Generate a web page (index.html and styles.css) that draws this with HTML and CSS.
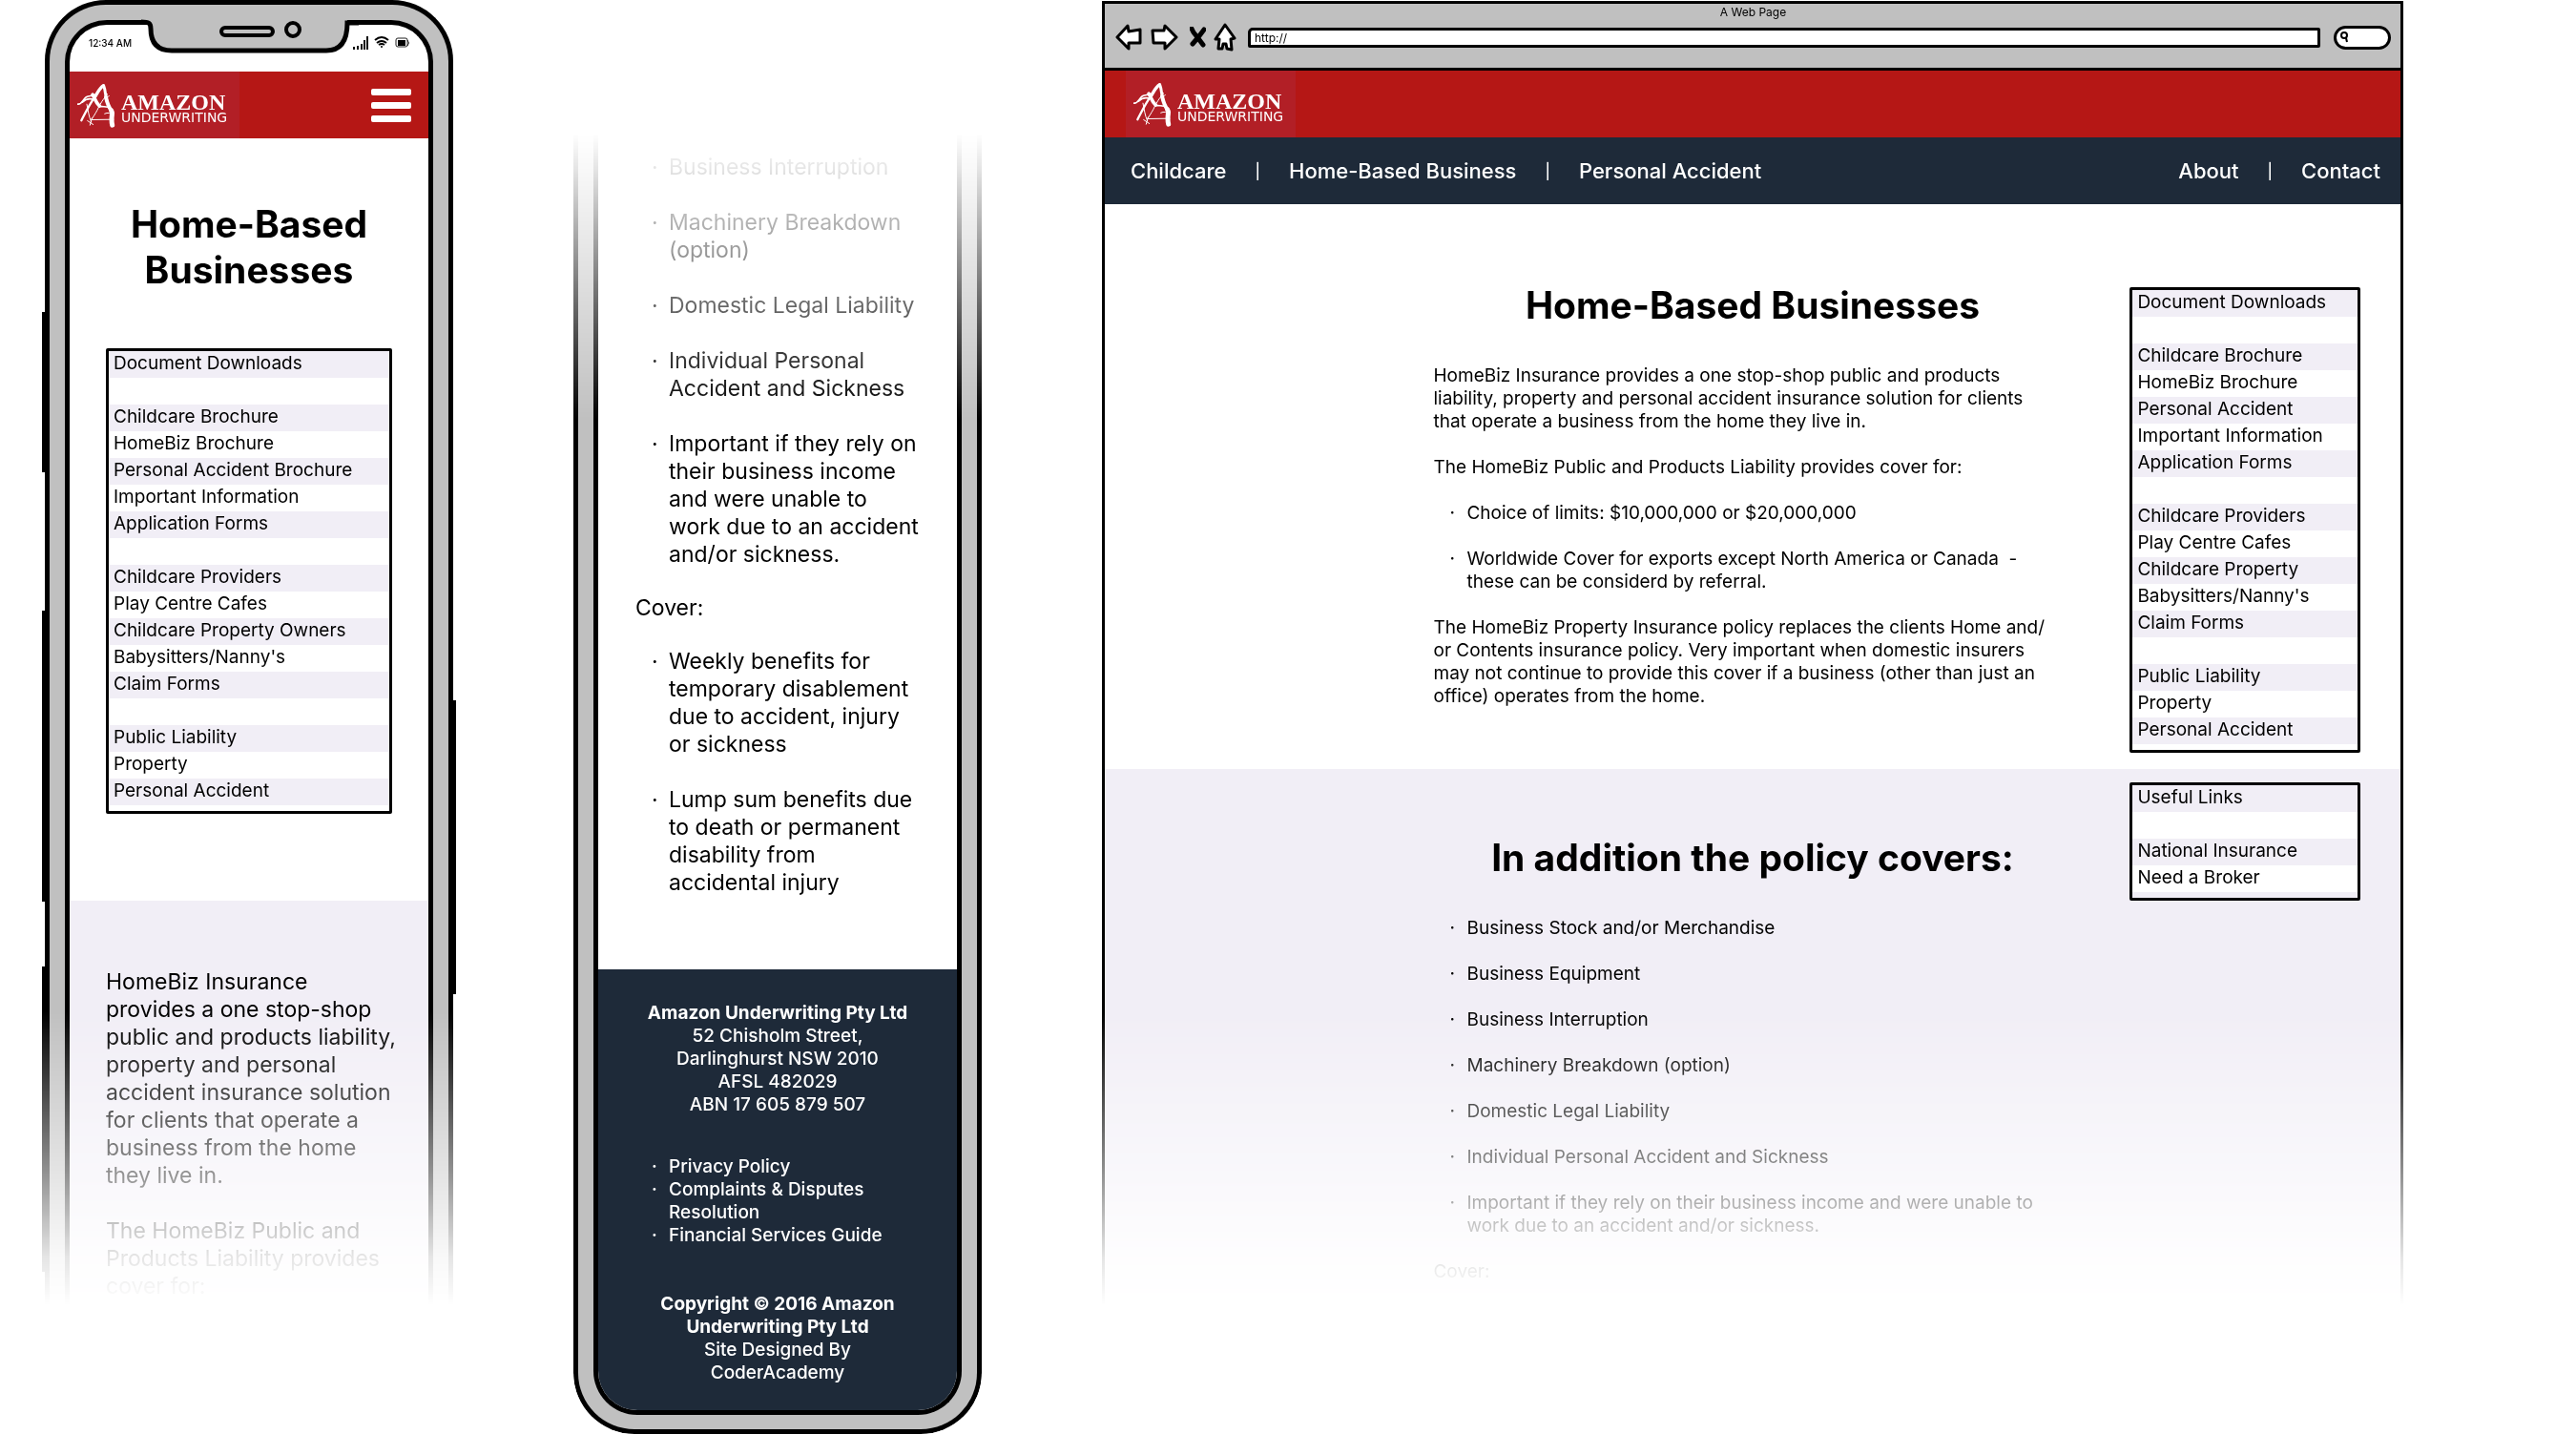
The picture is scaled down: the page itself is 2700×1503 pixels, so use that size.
FILE: index.html
```html
<!DOCTYPE html>
<html lang="en">
<head>
<meta charset="utf-8">
<title>Amazon Underwriting – Home-Based Businesses</title>
<link rel="stylesheet" href="styles.css">
</head>
<body>
<svg class="defs" aria-hidden="true">
  <symbol id="mark" viewBox="150 256 120 140">
    <g fill="none" stroke="#fff" stroke-linecap="round" stroke-linejoin="round">
      <path stroke-width="10" d="M232 264C221 270 214 286 205 300"/>
      <path stroke-width="7" d="M208 296C194 312 180 340 163 373"/>
      <path stroke-width="9" d="M233 264C239 278 238 296 243 312"/>
      <path stroke-width="11" d="M198 292C206 304 208 318 220 328"/>
      <path stroke-width="12" d="M240 300C244 318 248 330 257 342"/>
      <path stroke-width="15" d="M257 342C264 352 254 362 260 388"/>
      <path stroke-width="5" d="M152 322C164 324 168 306 178 300C188 294 196 298 204 292M166 316C176 306 186 304 196 306M220 328C232 332 244 326 256 336"/>
      <path stroke-width="3" d="M238 300C228 310 224 320 218 330C212 344 204 356 195 370M180 322C184 342 186 360 194 378M195 371L264 370M244 290C238 300 244 304 250 296M182 374L200 386M196 366L190 388M236 352C246 346 256 354 266 350"/>
    </g>
  </symbol>
</svg>

<main class="board">

  <article class="phone phone-top" aria-label="Mobile page, top">
    <i class="key key-a"></i><i class="key key-b"></i><i class="key key-c"></i><i class="key key-d"></i>
    <svg class="notch" width="228" height="40" viewBox="148 18 228 40" aria-hidden="true">
      <path d="M148 18H376V21H364V26C364 42 358 53 342 53H180C162 53 157 40 158 27C157 24 155 23 148 22Z" fill="#c0c0c0"/>
      <path d="M148 23C156 23 158 24 158 30C158 44 164 53 180 53H342C358 53 364 42 364 24H376" fill="none" stroke="#000" stroke-width="5"/>
      <rect x="232" y="29" width="54" height="8" rx="4" fill="#c0c0c0" stroke="#000" stroke-width="4"/>
      <ellipse cx="307" cy="31" rx="7" ry="7" fill="#c0c0c0" stroke="#000" stroke-width="4"/>
    </svg>
    <div class="screen">
      <div class="status">
        <span>12:34 AM</span>
        <svg width="60" height="16" viewBox="369 37 60 16" aria-hidden="true">
          <path d="M370 49V52M374 48V52M378 46V52M381 42V52M384 38V52" stroke="#111" stroke-width="2"/>
          <path d="M392 42Q399 36 406 42M394 45Q399 41 404 45M396 47Q399 45 402 47" fill="none" stroke="#000" stroke-width="2"/>
          <circle cx="399" cy="49" r="1" fill="#000"/>
          <rect x="414" y="40" width="12" height="9" rx="2" fill="#fff" stroke="#222"/>
          <rect x="416" y="42" width="8" height="6" fill="#000"/>
          <path d="M426 42Q429 45 426 48" fill="none" stroke="#222"/>
        </svg>
      </div>
      <header class="brand">
        <a class="logo" href="#"><svg width="40" height="47" aria-hidden="true"><use href="#mark"/></svg><span><b>AMAZON</b><small>UNDERWRITING</small></span></a>
        <button class="burger" aria-label="Menu"><i></i><i></i><i></i></button>
      </header>
      <section class="m-intro">
        <h1>Home-Based<br>Businesses</h1>
        <ul class="links">
          <li>Document Downloads</li>
          <li></li>
          <li><a href="#">Childcare Brochure</a></li>
          <li><a href="#">HomeBiz Brochure</a></li>
          <li><a href="#">Personal Accident Brochure</a></li>
          <li><a href="#">Important Information</a></li>
          <li>Application Forms</li>
          <li></li>
          <li><a href="#">Childcare Providers</a></li>
          <li><a href="#">Play Centre Cafes</a></li>
          <li><a href="#">Childcare Property Owners</a></li>
          <li><a href="#">Babysitters/Nanny's</a></li>
          <li>Claim Forms</li>
          <li></li>
          <li><a href="#">Public Liability</a></li>
          <li><a href="#">Property</a></li>
          <li><a href="#">Personal Accident</a></li>
        </ul>
      </section>
      <section class="m-about copy">
        <p>HomeBiz Insurance<br>provides a one stop-shop<br>public and products liability,<br>property and personal<br>accident insurance solution<br>for clients that operate a<br>business from the home<br>they live in.</p>
        <p>The HomeBiz Public and<br>Products Liability provides<br>cover for:</p>
      </section>
    </div>
  </article>

  <article class="phone phone-end" aria-label="Mobile page, end">
    <div class="screen">
      <section class="m-cover copy">
        <ul class="dots">
          <li><span>Business Interruption</span></li>
          <li><span>Machinery Breakdown<br>(option)</span></li>
          <li><span>Domestic Legal Liability</span></li>
          <li><span>Individual Personal<br>Accident and Sickness</span></li>
          <li><span>Important if they rely on<br>their business income<br>and were unable to<br>work due to an accident<br>and/or sickness.</span></li>
        </ul>
        <p>Cover:</p>
        <ul class="dots">
          <li><span>Weekly benefits for<br>temporary disablement<br>due to accident, injury<br>or sickness</span></li>
          <li><span>Lump sum benefits due<br>to death or permanent<br>disability from<br>accidental injury</span></li>
        </ul>
      </section>
      <footer class="foot">
        <address><b>Amazon Underwriting Pty Ltd</b><br>52 Chisholm Street,<br>Darlinghurst NSW 2010<br>AFSL 482029<br>ABN 17 605 879 507</address>
        <ul class="dots tight">
          <li><a href="#">Privacy Policy</a></li>
          <li><a href="#">Complaints &amp; Disputes<br>Resolution</a></li>
          <li><a href="#">Financial Services Guide</a></li>
        </ul>
        <p><b>Copyright © 2016 Amazon<br>Underwriting Pty Ltd</b><br>Site Designed By<br>CoderAcademy</p>
      </footer>
    </div>
  </article>

  <article class="browser" aria-label="Desktop page">
    <div class="chrome">
      <div class="title">A Web Page</div>
      <div class="toolbar">
        <button aria-label="Back"><svg width="28" height="28" viewBox="0 0 28 28"><path d="M2 14L13 2L14 8L26 6V20L14 20V26Z"/></svg></button>
        <button aria-label="Forward"><svg width="30" height="28" viewBox="0 0 30 28"><path d="M28 14L16 2L15 7L3 7L4 20L16 20V26Z"/></svg></button>
        <button class="stop" aria-label="Stop"><svg width="17" height="22" viewBox="0 0 17 22"><path d="M2 2L4 6L8 11L14 19M15 3L9 11L3 18"/></svg></button>
        <button aria-label="Home"><svg width="24" height="30" viewBox="0 0 24 30"><path d="M12 2L2 17L6 17L5 27H9L10 22H13L14 27L19 28L18 17L22 16Z"/></svg></button>
        <input class="url" type="text" value="http://" aria-label="Address">
        <label class="search"><svg width="12" height="14" viewBox="0 0 12 14" aria-hidden="true"><circle cx="6" cy="5" r="3"/><path d="M8 8L9 12"/></svg><input type="search" aria-label="Search"></label>
      </div>
    </div>
    <header class="brand">
      <a class="logo" href="#"><svg width="40" height="47" aria-hidden="true"><use href="#mark"/></svg><span><b>AMAZON</b><small>UNDERWRITING</small></span></a>
    </header>
    <nav class="nav">
      <a href="#">Childcare</a><span>|</span><a href="#">Home-Based Business</a><span>|</span><a href="#">Personal Accident</a>
      <a class="push" href="#">About</a><span>|</span><a href="#">Contact</a>
    </nav>
    <div class="body">
      <section class="intro">
        <div class="text">
          <h1>Home-Based Businesses</h1>
          <p>HomeBiz Insurance provides a one stop-shop public and products<br>liability, property and personal accident insurance solution for clients<br>that operate a business from the home they live in.</p>
          <p>The HomeBiz Public and Products Liability provides cover for:</p>
          <ul class="dots">
            <li><span>Choice of limits: $10,000,000 or $20,000,000</span></li>
            <li><span>Worldwide Cover for exports except North America or Canada&nbsp; -<br>these can be considerd by referral.</span></li>
          </ul>
          <p>The HomeBiz Property Insurance policy replaces the clients Home and/<br>or Contents insurance policy. Very important when domestic insurers<br>may not continue to provide this cover if a business (other than just an<br>office) operates from the home.</p>
        </div>
      </section>
      <section class="covers">
        <div class="text">
          <h2>In addition the policy covers:</h2>
          <ul class="dots">
            <li><span>Business Stock and/or Merchandise</span></li>
            <li><span>Business Equipment</span></li>
            <li><span>Business Interruption</span></li>
            <li><span>Machinery Breakdown (option)</span></li>
            <li><span>Domestic Legal Liability</span></li>
            <li><span>Individual Personal Accident and Sickness</span></li>
            <li><span>Important if they rely on their business income and were unable to<br>work due to an accident and/or sickness.</span></li>
          </ul>
          <p>Cover:</p>
        </div>
      </section>
      <aside class="side">
        <ul class="links">
          <li>Document Downloads</li>
          <li></li>
          <li><a href="#">Childcare Brochure</a></li>
          <li><a href="#">HomeBiz Brochure</a></li>
          <li><a href="#">Personal Accident</a></li>
          <li><a href="#">Important Information</a></li>
          <li>Application Forms</li>
          <li></li>
          <li><a href="#">Childcare Providers</a></li>
          <li><a href="#">Play Centre Cafes</a></li>
          <li><a href="#">Childcare Property</a></li>
          <li><a href="#">Babysitters/Nanny's</a></li>
          <li>Claim Forms</li>
          <li></li>
          <li><a href="#">Public Liability</a></li>
          <li><a href="#">Property</a></li>
          <li><a href="#">Personal Accident</a></li>
        </ul>
        <ul class="links">
          <li>Useful Links</li>
          <li></li>
          <li><a href="#">National Insurance</a></li>
          <li><a href="#">Need a Broker</a></li>
        </ul>
      </aside>
    </div>
  </article>
</main>
</body>
</html>
```
FILE: styles.css
```css
:root {
  --red: #b51715;
  --navy: #1e2a39;
  --lilac: #f1eef6;
  --metal: #c0c0c0;
  --fade: linear-gradient(to bottom, #000 1060px, rgba(0,0,0,.42) 1232px, rgba(0,0,0,.1) 1318px, transparent 1368px);
  --fade-in: linear-gradient(to bottom, transparent 0, rgba(0,0,0,.1) 36px, rgba(0,0,0,.4) 123px, #000 300px);
}
* { box-sizing: border-box; }
body {
  margin: 0;
  background: #fff;
  color: #000;
  font: 400 19px/24px Inter, "Liberation Sans", sans-serif;
}
h1, h2, p, ul { margin: 0; padding: 0; }
ul { list-style: none; }
a { color: inherit; text-decoration: none; }
button { padding: 0; border: 0; background: none; }
svg { display: block; }
.defs { position: absolute; width: 0; height: 0; }
h1, h2 { font-size: 39px; line-height: 48px; font-weight: 700; text-align: center; }

.board {
  display: grid;
  grid-template-columns: 428px 428px minmax(0, 1fr);
  column-gap: 126px;
  align-items: start;
  padding: 0 181px 0 47px;
}

/* phones */
.phone {
  position: relative;
  background: var(--metal);
  border: 5px solid #000;
  padding: 16px 16px;
}
.screen { border: 5px solid #000; background: #fff; overflow: hidden; }
.phone-top {
  border-bottom: 0;
  padding-bottom: 0;
  border-radius: 64px 64px 0 0;
  -webkit-mask-image: var(--fade);
  mask-image: var(--fade);
  mask-clip: no-clip;
}
.phone-top .screen { border-bottom: 0; border-radius: 44px 44px 0 0; }
.phone-end {
  margin-top: 140px;
  border-top: 0;
  padding: 0 16px 15px;
  border-radius: 0 0 64px 64px;
  -webkit-mask-image: var(--fade-in);
  mask-image: var(--fade-in);
}
.phone-end .screen { border-top: 0; border-radius: 0 0 46px 46px; }

.key { position: absolute; width: 3px; background: #000; left: -8px; }
.key-a { top: 322px; height: 168px; }
.key-b { top: 635px; height: 305px; }
.key-c { top: 1008px; height: 320px; }
.key-d { top: 729px; height: 308px; left: auto; right: -8px; }
.notch { position: absolute; left: 96px; top: 13px; }

.status {
  display: flex;
  justify-content: space-between;
  align-items: center;
  height: 49px;
  padding: 0 19px 12px 20px;
  font-size: 10px;
  font-weight: 500;
  line-height: 12px;
}

.brand { display: flex; align-items: center; justify-content: space-between; background: var(--red); height: 70px; }
.logo { display: flex; align-items: center; gap: 6px; width: 178px; height: 70px; padding-left: 8px; background: #b21f26; color: #fff; }
.logo span { display: block; padding-top: 6px; }
.logo b { display: block; font: 700 24px/20px "Liberation Serif", serif; }
.logo small { display: block; font: 400 14px/12px "DejaVu Sans", sans-serif; }
.burger { display: grid; gap: 7px; width: 42px; margin-right: 18px; }
.burger i { height: 7px; border-radius: 2px; background: #fff; }

.m-intro { padding: 66px 38px 91px; }
.m-intro .links { margin-top: 58px; }
.m-about { background: var(--lilac); padding: 71px 0 7px 38px; }
.copy { display: grid; gap: 29px; font-size: 23px; line-height: 29px; white-space: nowrap; }
.copy.m-cover { gap: 27px; padding: 21px 0 76px 39px; }

.links {
  border: 3px solid #000;
  border-radius: 2px;
  padding-bottom: 6px;
  background: repeating-linear-gradient(var(--lilac) 0 28px, #fff 28px 56px) padding-box;
}
.links li { height: 28px; padding-left: 5px; line-height: 26px; white-space: nowrap; }

.dots { display: grid; gap: 24px; padding-left: 17px; }
.copy .dots { gap: 29px; }
.dots li { display: grid; grid-template-columns: 18px 1fr; }
.dots li::before { content: "·"; }
.foot .tight { gap: 0; padding-left: 56px; }

.foot { background: var(--navy); color: #fff; padding: 34px 0 27px; font-weight: 500; text-align: center; }
.foot address { font-style: normal; }
.foot .tight { margin: 41px 0 48px; text-align: left; }

/* browser window */
.browser {
  border: 3px solid #000;
  border-bottom: 0;
  background: #fff;
  margin-top: 1px;
  -webkit-mask-image: var(--fade);
  mask-image: var(--fade);
}
.chrome { background: var(--metal); border-bottom: 3px solid #000; height: 70px; padding: 0 10px 0 11px; }
.title { font-size: 12px; line-height: 18px; text-align: center; }
.toolbar { display: flex; align-items: center; height: 34px; }
.toolbar button { margin-right: 8px; }
.toolbar button svg { fill: #fff; stroke: #000; stroke-width: 3; stroke-linejoin: round; stroke-linecap: round; }
.toolbar .stop { margin-left: 4px; }
.toolbar .stop svg { fill: none; stroke-width: 5; }
.url {
  flex: 1;
  min-width: 0;
  height: 21px;
  margin-left: 4px;
  padding: 0 4px;
  border: 3px solid #000;
  border-radius: 5px 2px 2px 2px;
  background: #fff;
  color: #000;
  font: 400 12px/15px Inter, sans-serif;
}
.search { display: flex; align-items: center; width: 60px; height: 25px; margin-left: 14px; padding-left: 2px; border: 3px solid #000; border-radius: 14px; background: #fff; }
.search svg { fill: none; stroke: #000; stroke-width: 2; }
.search input { width: 36px; height: 16px; padding: 0; border: 0; background: none; }

.browser .brand { padding-left: 22px; }
.nav { display: flex; align-items: center; gap: 30px; height: 70px; padding: 0 21px 0 27px; background: var(--navy); color: #fff; font-size: 22px; font-weight: 500; white-space: nowrap; }
.nav span { font-size: 16px; }
.nav .push { margin-left: auto; }

.body { display: grid; grid-template-columns: 345fr 670fr 61fr 242fr 42fr; grid-template-rows: auto auto; }
.intro, .covers { grid-column: 1 / -1; display: grid; grid-template-columns: subgrid; }
.intro { grid-row: 1; padding: 82px 0 64px; }
.covers { grid-row: 2; background: var(--lilac); padding: 69px 0 22px; }
.text { grid-column: 2; display: grid; gap: 24px; white-space: nowrap; }
.text h1, .text h2 { margin-bottom: 14px; }
.side { grid-column: 4; grid-row: 1 / 3; display: grid; align-content: start; gap: 31px; padding-top: 87px; z-index: 1; }
```
